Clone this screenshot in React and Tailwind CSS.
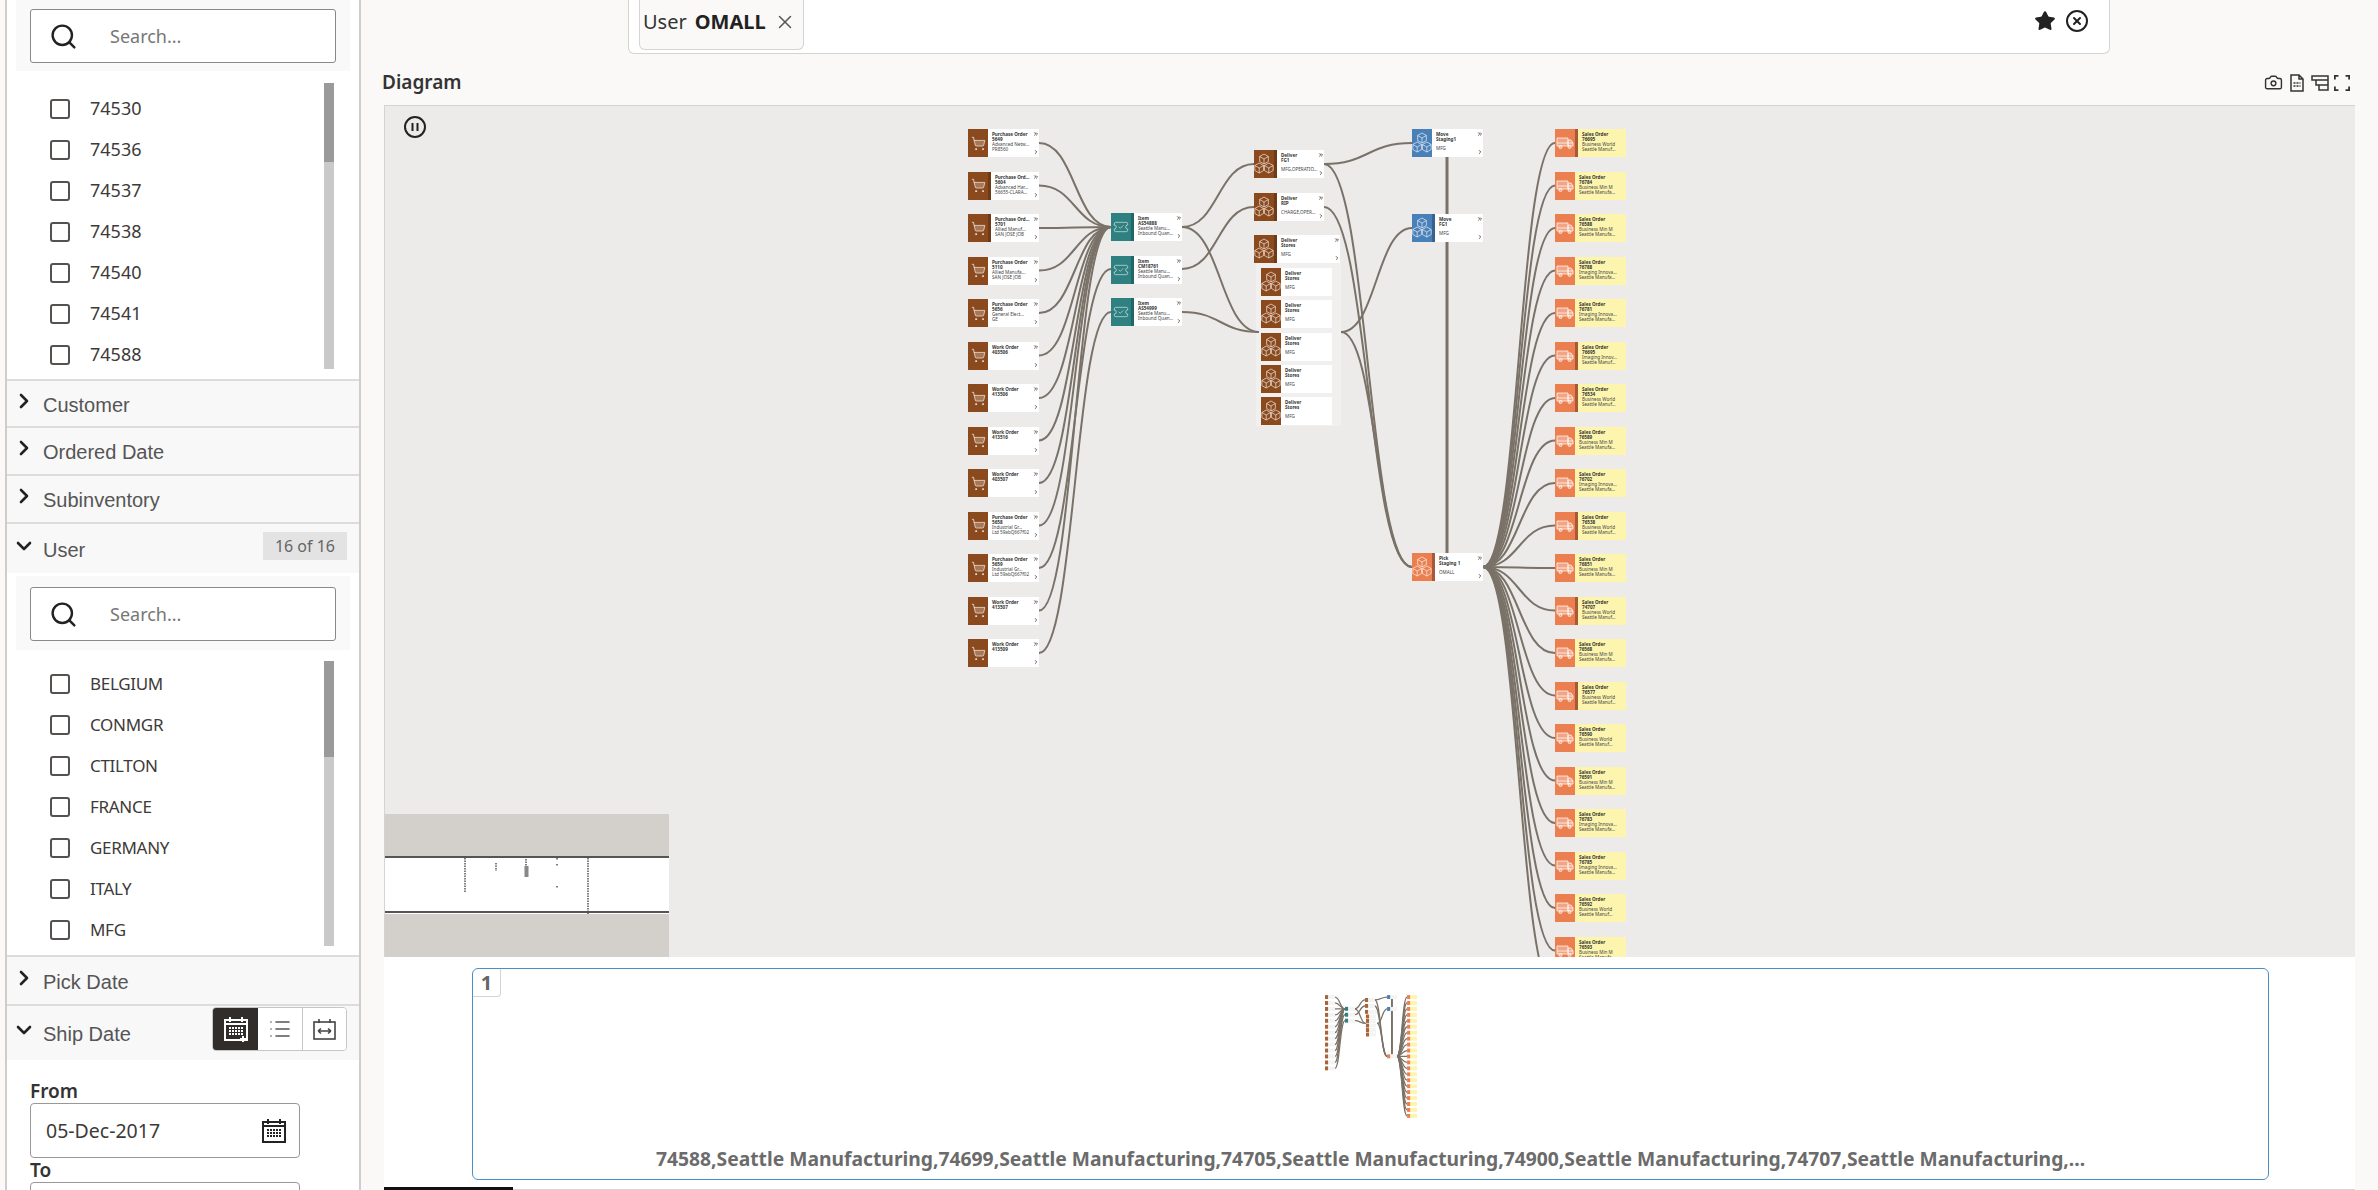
import { Camera, ChevronDown, ChevronRight, CircleX, List, Search, ShoppingCart, Star, TicketCheck, X, ChevronsRight } from 'lucide-react';

const OX = 384;
const OY = 105;
const NODE_H = 28;
const PITCH = 42.5;

const leftRows = [
  ['Purchase Order', '5649', 'Advanced Netw...', 'PR8560', false],
  ['Purchase Ord...', '5604', 'Advanced Har...', '56655-CLARA...', true],
  ['Purchase Ord...', '5701', 'Allied Manuf...', 'SAN JOSE JOB', true],
  ['Purchase Order', '5110', 'Allied Manufa...', 'SAN JOSE JOB', false],
  ['Purchase Order', '5656', 'General Elect...', 'GE', false],
  ['Work Order', '403506', '', '', false],
  ['Work Order', '413506', '', '', false],
  ['Work Order', '413516', '', '', false],
  ['Work Order', '403507', '', '', false],
  ['Purchase Order', '5658', 'Industrial Gr...', 'Ltd 59abQ667f02', false],
  ['Purchase Order', '5659', 'Industrial Gr...', 'Ltd 59abQ667f02', false],
  ['Work Order', '413507', '', '', false],
  ['Work Order', '413509', '', '', false],
];

const salesRows = [
  ['76695', 'Business World', 'Seattle Manuf...', true],
  ['76784', 'Business Min M', 'Seattle Manufa...', false],
  ['76588', 'Business Min M', 'Seattle Manufa...', false],
  ['76788', 'Imaging Innova...', 'Seattle Manufa...', false],
  ['76781', 'Imaging Innova...', 'Seattle Manufa...', false],
  ['76695', 'Imaging Innov...', 'Seattle Manuf...', true],
  ['76534', 'Business World', 'Seattle Manuf...', true],
  ['76589', 'Business Min M', 'Seattle Manufa...', false],
  ['76702', 'Imaging Innova...', 'Seattle Manufa...', false],
  ['76538', 'Business World', 'Seattle Manuf...', true],
  ['76851', 'Business Min M', 'Seattle Manufa...', false],
  ['74707', 'Business World', 'Seattle Manuf...', true],
  ['76568', 'Business Min M', 'Seattle Manufa...', false],
  ['76577', 'Business World', 'Seattle Manuf...', true],
  ['76590', 'Business World', 'Seattle Manuf...', false],
  ['76591', 'Business Min M', 'Seattle Manufa...', false],
  ['76783', 'Imaging Innova...', 'Seattle Manufa...', false],
  ['76785', 'Imaging Innova...', 'Seattle Manufa...', false],
  ['76592', 'Business World', 'Seattle Manuf...', false],
  ['76593', 'Business Min M', 'Seattle Manufa...', false],
  ['76594', 'Business World', 'Seattle Manuf...', false],
];

function Cube({ x, y }) {
  const r = 5;
  const h = r * 0.87;
  return (
    <path
      d={`M${x} ${y - r}L${x + h} ${y - r / 2}V${y + r / 2}L${x} ${y + r}L${x - h} ${y + r / 2}V${y - r / 2}ZM${x - h} ${y - r / 2}L${x} ${y}L${x + h} ${y - r / 2}M${x} ${y}V${y + r}`}
    />
  );
}

function CubesIcon() {
  return (
    <svg width="20" height="24" viewBox="0 0 20 24" fill="none" stroke="#fff" strokeOpacity="0.88" strokeWidth="0.7">
      <Cube x={10} y={7} />
      <Cube x={5.2} y={16} />
      <Cube x={14.8} y={16} />
    </svg>
  );
}

function VanIcon() {
  return (
    <svg width="18" height="14" viewBox="0 0 18 14" fill="#fff" fillOpacity="0.3" stroke="#fff" strokeOpacity="0.9" strokeWidth="0.8">
      <path d="M1 2h11v8H1zM12 4h3l2 3v3h-5z" />
      <path d="M1 7h16" />
      <circle cx="4.5" cy="11" r="1.5" />
      <circle cx="13.5" cy="11" r="1.5" />
    </svg>
  );
}

function CartIcon() {
  return <ShoppingCart size={15} strokeWidth={1.1} fill="#ffffff40" className="text-white/90" />;
}

function ItemIcon() {
  return <TicketCheck size={16} strokeWidth={0.9} className="text-white/90" />;
}

// calendar with a dotted day grid, used by the date field and the range toggle
function CalendarIcon({ plus }) {
  return (
    <svg width="26" height="26" viewBox="0 0 26 26" fill="none" stroke="currentColor">
      <path d="M7 1v5M19 1v5" strokeWidth="2" />
      <rect x="2" y="4" width="22" height="20" strokeWidth="2" />
      <path d="M2 8h22" strokeWidth="2" />
      <path d="M6 12h14M6 15h14M6 18h14" strokeWidth="2" strokeDasharray="2 1" />
      {plus ? <path d="M20 20v6M17 23h6" strokeWidth="2" /> : null}
    </svg>
  );
}

const kinds = {
  cart: { bg: 'bg-[#8a4a1e]', band: 'bg-[#6f3a16]', Icon: CartIcon },
  item: { bg: 'bg-[#2f8080]', band: 'bg-[#226767]', Icon: ItemIcon },
  box: { bg: 'bg-[#8a4a1e]', band: 'bg-[#6f3a16]', Icon: CubesIcon },
  blue: { bg: 'bg-[#4a80b8]', band: 'bg-[#36648f]', Icon: CubesIcon },
  pick: { bg: 'bg-[#ec7f4f]', band: 'bg-[#a85a38]', Icon: CubesIcon },
  ship: { bg: 'bg-[#ec7f4f]', band: 'bg-[#a85a38]', Icon: VanIcon },
};

const nodes = [
  ...leftRows.map((r, i) => ({ x: 967, y: 128 + i * PITCH, w: 71, kind: 'cart', t: [r[0], r[1]], s: [r[2], r[3]], band: r[4], arrows: true })),
  { x: 1110, y: 212, w: 71, kind: 'item', t: ['Item', 'AS54888'], s: ['Seattle Manu...', 'Inbound Quan...'], band: true, arrows: true },
  { x: 1110, y: 254.5, w: 71, kind: 'item', t: ['Item', 'CM18761'], s: ['Seattle Manu...', 'Inbound Quan...'], band: true, arrows: true },
  { x: 1110, y: 297, w: 71, kind: 'item', t: ['Item', 'AS54999'], s: ['Seattle Manu...', 'Inbound Quan...'], band: true, arrows: true },
  { x: 1253, y: 149, w: 70, kind: 'box', t: ['Deliver', 'FG1'], s: ['', 'MFG,OPERATIO...'], band: true, arrows: true },
  { x: 1253, y: 191.5, w: 70, kind: 'box', t: ['Deliver', 'RIP'], s: ['', 'CHARGE,OPERA...'], band: true, arrows: true },
  { x: 1253, y: 234, w: 86, kind: 'box', t: ['Deliver', 'Stores'], s: ['', 'MFG'], band: true, arrows: true },
  ...[267, 299, 332, 364, 396].map((y) => ({ x: 1260, y, w: 71, kind: 'box', t: ['Deliver', 'Stores'], s: ['', 'MFG'] })),
  { x: 1411, y: 128, w: 71, kind: 'blue', t: ['Move', 'Staging1'], s: ['', 'MFG'], arrows: true },
  { x: 1411, y: 213, w: 71, kind: 'blue', t: ['Move', 'FG1'], s: ['', 'MFG'], band: true, arrows: true },
  { x: 1411, y: 552, w: 71, kind: 'pick', t: ['Pick', 'Staging 1'], s: ['', 'OMALL'], band: true, arrows: true },
  ...salesRows.map((r, i) => ({ x: 1554, y: 128 + i * PITCH, w: 71, kind: 'ship', t: ['Sales Order', r[0]], s: [r[1], r[2]], band: r[3], yellow: true })),
];

const curve = (x1, y1, x2, y2) => {
  const m = (x1 + x2) / 2;
  return `M${x1} ${y1}C${m} ${y1} ${m} ${y2} ${x2} ${y2}`;
};

const edges = [
  ...leftRows.map((_, i) => {
    const y = 142 + i * PITCH;
    if (i === 10) return curve(1038, y, 1110, 268);
    if (i === 12) return curve(1038, y, 1110, 311);
    return curve(1038, y, 1110, 226);
  }),
  curve(1181, 226, 1253, 163),
  curve(1181, 226, 1258, 331),
  curve(1181, 268, 1253, 206),
  curve(1181, 311, 1258, 331),
  curve(1323, 163, 1411, 142),
  curve(1323, 163, 1411, 566),
  curve(1323, 206, 1411, 566),
  curve(1340, 331, 1411, 227),
  curve(1340, 331, 1411, 566),
  ...salesRows.map((_, i) => curve(1482, 566, 1554, 142 + i * PITCH)),
];

function DiagramNode({ n }) {
  const k = kinds[n.kind];
  const Icon = k.Icon;
  return (
    <div
      className={`absolute flex h-[28px] overflow-hidden ${n.yellow ? 'bg-[#fdf5ae]' : 'bg-white'}`}
      style={{ left: n.x - OX, top: n.y - OY, width: n.w }}
    >
      <div className={`flex h-full w-[20px] shrink-0 items-center justify-center ${k.bg}`}>
        <Icon />
      </div>
      {n.band ? <div className={`h-full w-[3px] shrink-0 ${k.band}`} /> : null}
      <div className="min-w-0 flex-1 pl-[4px] pt-[3px] font-['Noto_Sans',sans-serif] text-[4.6px] leading-[5px] text-[#444]">
        <div className="font-bold text-[#333]">{n.t[0]}</div>
        <div className="font-bold text-[#333]">{n.t[1]}</div>
        {n.s[0] ? <div className="truncate">{n.s[0]}</div> : <div className="h-[4px]" />}
        {n.s[1] ? <div className="truncate">{n.s[1]}</div> : null}
      </div>
      {n.arrows ? (
        <div className="flex w-[6px] shrink-0 flex-col items-center justify-between py-[2px] text-[#333]">
          <ChevronsRight size={6} strokeWidth={3} />
          <ChevronRight size={6} strokeWidth={3} />
        </div>
      ) : null}
    </div>
  );
}

function Thumbnail() {
  const fills = { cart: '#a8643a', item: '#2f8080', box: '#a8643a', blue: '#4a80b8', pick: '#ec7f4f', ship: '#ec7f4f' };
  return (
    <svg width="92" height="127" viewBox="967 128 658 907" className="shrink-0">
      <g fill="none" stroke="#7a7268" strokeWidth="9">
        {edges.map((d, i) => (
          <path key={i} d={d} />
        ))}
        <path d="M1446 156V552" strokeWidth="14" />
      </g>
      {nodes.map((n, i) => (
        <g key={i}>
          <rect x={n.x + 20} y={n.y} width={n.w - 20} height={NODE_H} fill={n.yellow ? '#fdf5ae' : '#f4f4f2'} />
          <rect x={n.x} y={n.y} width={22} height={NODE_H} fill={fills[n.kind]} />
        </g>
      ))}
    </svg>
  );
}

function SearchBox({ className }) {
  return (
    <div className={`mx-[9px] bg-[#f9f9f9] px-[14px] ${className}`}>
      <div className="flex h-[54px] items-center rounded-[3px] border border-[#8b8987] bg-white pl-[18px]">
        <Search size={29} strokeWidth={2} className="text-[#222]" />
        <span className="ml-[32px] text-[18px] text-[#777]">Search...</span>
      </div>
    </div>
  );
}

function CheckList({ items, className, rowsClass, thumb, labelClass }) {
  return (
    <div className={`flex pl-[43px] pr-[25px] ${className}`}>
      <div className={`flex-1 ${rowsClass}`}>
        {items.map((label) => (
          <div key={label} className="flex h-[41px] items-center">
            <span className="h-[20px] w-[20px] rounded-[3px] border-2 border-[#55514e] bg-white" />
            <span className={`ml-[20px] text-[#3d3a38] ${labelClass}`}>{label}</span>
          </div>
        ))}
      </div>
      <div className="w-[10px] bg-[#c9c9c9]">
        <div className={`bg-[#9a9a9a] ${thumb}`} />
      </div>
    </div>
  );
}

function Section({ label, open, h, right }) {
  const Icon = open ? ChevronDown : ChevronRight;
  return (
    <div className={`flex items-center justify-between border-t-2 border-[#dedcda] bg-[#f8f8f8] pl-[5px] pr-[12px] ${h}`}>
      <div className="flex items-center gap-[7px]">
        <Icon size={24} strokeWidth={2.6} className="-translate-y-[3px] text-[#222]" />
        <span className="translate-y-[1px] font-['Liberation_Sans',sans-serif] text-[20px] text-[#555]">{label}</span>
      </div>
      {right}
    </div>
  );
}

function DateField({ value }) {
  return (
    <div className="flex h-[55px] w-[270px] items-center justify-between rounded-[4px] border border-[#9a9896] bg-white pl-[15px] pr-[12px] text-[19.5px] text-[#3d3a38]">
      <span>{value}</span>
      {value ? (
        <span className="text-[#222]">
          <CalendarIcon />
        </span>
      ) : null}
    </div>
  );
}

function Sidebar() {
  return (
    <aside className="ml-[5px] h-full w-[356px] shrink-0 overflow-hidden border-x-2 border-[#cfcdcb] bg-white">
      <SearchBox className="h-[71px] pt-[9px]" />
      <CheckList
        items={['74530', '74536', '74537', '74538', '74540', '74541', '74588']}
        className="h-[308px] pt-[12px] pb-[10px]"
        rowsClass="pt-[5px]"
        thumb="h-[79px]"
        labelClass="text-[18px]"
      />
      <Section label="Customer" h="h-[47px]" />
      <Section label="Ordered Date" h="h-[48px]" />
      <Section label="Subinventory" h="h-[48px]" />
      <Section
        label="User"
        open
        h="h-[51px]"
        right={<span className="mb-[6px] bg-[#e3e3e3] px-[12px] py-[2px] text-[16px] text-[#666]">16 of 16</span>}
      />
      <SearchBox className="mt-[3px] h-[74px] pt-[11px]" />
      <CheckList
        items={['BELGIUM', 'CONMGR', 'CTILTON', 'FRANCE', 'GERMANY', 'ITALY', 'MFG']}
        className="h-[305px] pt-[11px] pb-[9px]"
        rowsClass="pt-[2px]"
        thumb="h-[96px]"
        labelClass="text-[17px] tracking-[-0.3px]"
      />
      <Section label="Pick Date" h="h-[49px]" />
      <Section
        label="Ship Date"
        open
        h="h-[56px]"
        right={
          <div className="mb-[8px] flex h-[44px] overflow-hidden rounded-[4px] border border-[#c8c6c4]">
            <div className="flex w-[45px] items-center justify-center bg-[#312d2a] text-white">
              <CalendarIcon plus />
            </div>
            <div className="flex w-[45px] items-center justify-center border-r border-[#c8c6c4] bg-white text-[#555]">
              <List size={24} strokeWidth={1.6} />
            </div>
            <div className="flex w-[43px] items-center justify-center bg-white text-[#444]">
              <svg width="25" height="25" viewBox="0 0 25 25" fill="none" stroke="currentColor" strokeWidth="1.6">
                <rect x="2" y="5" width="21" height="17" />
                <path d="M7 2v4M18 2v4M6 14h13M6 14l3-2.5M6 14l3 2.5M19 14l-3-2.5M19 14l-3 2.5" />
              </svg>
            </div>
          </div>
        }
      />
      <div className="pl-[23px] pt-[19px]">
        <div className="text-[19px] font-semibold leading-[24px] text-[#333]">From</div>
        <DateField value="05-Dec-2017" />
        <div className="text-[19px] font-semibold leading-[24px] text-[#333]">To</div>
        <DateField value="" />
      </div>
    </aside>
  );
}

function DiagramTools() {
  return (
    <div className="flex items-center gap-[5px] pr-[5px] text-[#333]">
      <Camera size={19} strokeWidth={1.8} />
      <svg width="18" height="18" viewBox="0 0 18 18" fill="none" stroke="currentColor" strokeWidth="1.5">
        <path d="M3 1h8l4 4v12H3zM11 1v4h4" />
        <path d="M5.5 9h7M5.5 12h7" strokeDasharray="2 1" />
      </svg>
      <svg width="18" height="18" viewBox="0 0 18 18" fill="none" stroke="currentColor" strokeWidth="1.5">
        <path d="M1 2h16v4H1zM5 6h12v5H5zM8 11h9v5H8z" />
      </svg>
      <svg width="16" height="16" viewBox="0 0 18 18" fill="none" stroke="currentColor" strokeWidth="2">
        <path d="M1 5V1h4M13 1h4v4M17 13v4h-4M5 17H1v-4" />
      </svg>
    </div>
  );
}

function Canvas() {
  return (
    <div className="relative h-[852px] overflow-hidden border-l border-t border-[#d6d4d2] bg-[#ecebe9]">
      <svg className="absolute left-0 top-0" width="1971" height="852" viewBox={`${OX} ${OY} 1971 852`} fill="none" stroke="#7a7268" strokeWidth="2">
        <rect x="1255" y="262" width="85" height="163" fill="#f1f0ee" stroke="none" />
        {edges.map((d, i) => (
          <path key={i} d={d} />
        ))}
        <path d="M1446 156V213M1446 241V552" strokeWidth="3" />
      </svg>
      {nodes.map((n, i) => (
        <DiagramNode key={i} n={n} />
      ))}
      <svg className="absolute left-[18px] top-[9px] text-[#222]" width="24" height="24" viewBox="0 0 24 24" fill="none" stroke="currentColor" strokeWidth="2">
        <circle cx="12" cy="12" r="10" />
        <path d="M9.5 8v8M14.5 8v8" />
      </svg>
      <div className="absolute bottom-0 left-0 h-[143px] w-[284px] bg-[#d3d0cb] pt-[42px]">
        <svg width="284" height="58" viewBox="0 0 284 58" className="block bg-white">
          <path d="M0 1h285M0 56h285" stroke="#555" strokeWidth="2" />
          <path d="M80 2v35M111 7v8M141 3v18M172 2v2M172 8v2M172 30v2M203 2v56" stroke="#555" strokeWidth="1.5" strokeDasharray="1.5 1" fill="none" />
          <rect x="139.5" y="10" width="4" height="11" fill="#888" />
        </svg>
      </div>
    </div>
  );
}

function FilmStrip() {
  return (
    <div className="h-[233px] border-b-[1px] border-[#d6d4d2] bg-white">
      <div className="h-[230px] pl-[88px] pt-[11px]">
        <div className="relative flex h-[212px] w-[1797px] flex-col items-center rounded-[6px] border-[1.5px] border-[#4a90c8] pt-[26px]">
          <div className="absolute left-0 top-0 flex h-[28px] w-[28px] items-center justify-center rounded-br-[4px] border-b border-r border-[#d6d4d2] text-[20px] font-bold text-[#666]">
            1
          </div>
          <Thumbnail />
          <div className="mt-[23px] whitespace-nowrap text-[19.3px] font-bold text-[#6b6b6b]">
            74588,Seattle Manufacturing,74699,Seattle Manufacturing,74705,Seattle Manufacturing,74900,Seattle Manufacturing,74707,Seattle Manufacturing,...
          </div>
        </div>
      </div>
      <div className="h-[3px] w-[129px] bg-[#111]" />
    </div>
  );
}

export default function App() {
  return (
    <div className="flex h-[1190px] w-[2378px] overflow-hidden bg-[#faf9f8] font-['Noto_Sans',sans-serif]">
      <Sidebar />
      <main className="w-[2017px] shrink-0 pl-[23px] pr-[23px]">
        <div className="ml-[244px] flex h-[54px] w-[1482px] items-start justify-between rounded-b-[6px] border border-t-0 border-[#d6d4d2] bg-white pl-[10px] pr-[20px]">
          <div className="flex h-[50px] w-[165px] items-center rounded-b-[6px] border border-t-0 border-[#d6d4d2] bg-[#faf9f8] pl-[3px] pb-[6px] text-[20px] text-[#333]">
            <span>User</span>
            <span className="ml-[8px] font-bold text-[#222]">OMALL</span>
            <X size={22} strokeWidth={1.6} className="ml-[8px] text-[#555]" />
          </div>
          <div className="flex h-[42px] items-center gap-[9px] text-[#222]">
            <Star size={22} fill="currentColor" strokeWidth={1.5} />
            <CircleX size={24} strokeWidth={2} />
          </div>
        </div>
        <div className="flex h-[51px] items-center justify-between pt-[6px]">
          <span className="-translate-x-[2px] text-[19px] font-semibold text-[#333]">Diagram</span>
          <DiagramTools />
        </div>
        <Canvas />
        <FilmStrip />
      </main>
    </div>
  );
}
